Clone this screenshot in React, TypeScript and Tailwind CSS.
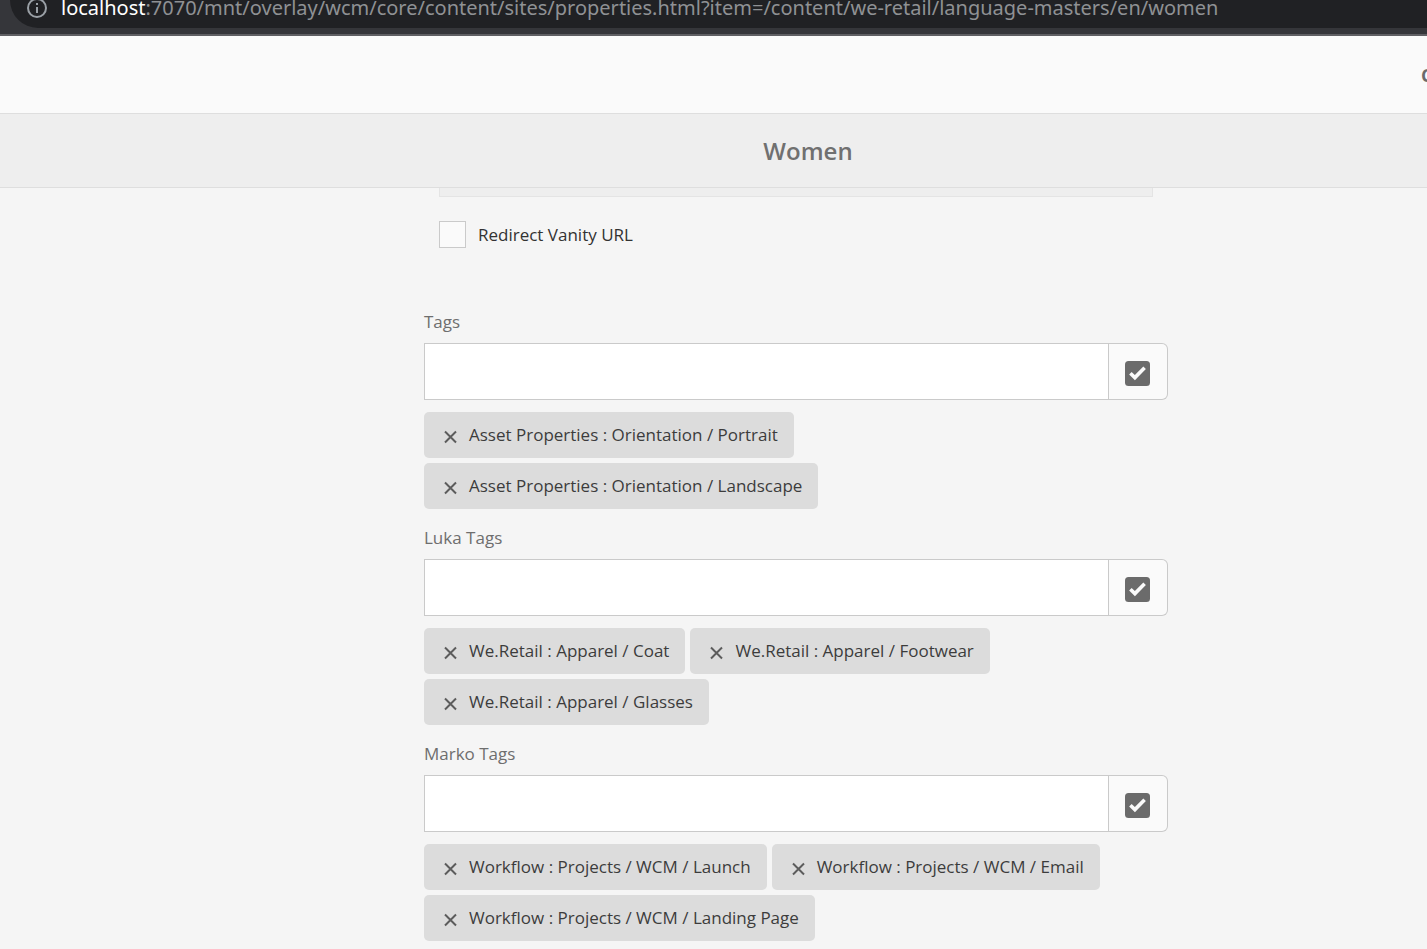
import { useState } from "react";

const fields = [
  {
    id: "tags",
    label: "Tags",
    tags: [
      "Asset Properties : Orientation / Portrait",
      "Asset Properties : Orientation / Landscape",
    ],
  },
  {
    id: "luka-tags",
    label: "Luka Tags",
    tags: [
      "We.Retail : Apparel / Coat",
      "We.Retail : Apparel / Footwear",
      "We.Retail : Apparel / Glasses",
    ],
  },
  {
    id: "marko-tags",
    label: "Marko Tags",
    tags: [
      "Workflow : Projects / WCM / Launch",
      "Workflow : Projects / WCM / Email",
      "Workflow : Projects / WCM / Landing Page",
    ],
  },
];

function InfoIcon() {
  return (
    <svg viewBox="0 0 22 22" className="mb-[3px] h-[22px] w-[22px] shrink-0" aria-hidden="true">
      <circle cx="11" cy="11" r="9" fill="none" stroke="#9aa0a6" strokeWidth="2" />
      <rect x="10" y="10" width="2" height="6" fill="#9aa0a6" />
      <rect x="10" y="6" width="2" height="2" fill="#9aa0a6" />
    </svg>
  );
}

function AddressBar() {
  return (
    <div className="border-b-2 border-[#5f5f63] bg-[#35363a] pb-[6px] pl-[10px]">
      <div className="flex h-7 items-end overflow-hidden rounded-bl-[28px] bg-[#202124] pb-[6px] pl-4">
        <InfoIcon />
        <span className="ml-[13px] font-['Noto_Sans','Open_Sans',sans-serif] text-[20px] leading-7 whitespace-nowrap text-[#8f9194]">
          <span className="text-white">localhost</span>
          :7070/mnt/overlay/wcm/core/content/sites/properties.html?item=/content/we-retail/language-masters/en/women
        </span>
      </div>
    </div>
  );
}

function Tag({ label, onRemove }: { label: string; onRemove: () => void }) {
  return (
    <li className="flex h-[46px] items-center rounded-[5px] bg-[#dcdcdc] pr-4 pl-5">
      <button type="button" aria-label={`Remove ${label}`} onClick={onRemove} className="mt-1">
        <svg viewBox="0 0 14 14" className="h-[14px] w-[14px]" aria-hidden="true">
          <path d="M1 1.5 12 12.5M12 1.5 1 12.5" stroke="#5c5c5c" strokeWidth="2" />
        </svg>
      </button>
      <span className="ml-[11px] whitespace-nowrap text-[#3c3c3c]">{label}</span>
    </li>
  );
}

function TagField({ id, label, tags }: { id: string; label: string; tags: string[] }) {
  const [selected, setSelected] = useState(tags);

  return (
    <div>
      <label htmlFor={id} className="mb-[9px] block leading-6 text-[#6e6e6e]">
        {label}
      </label>
      <div className="flex h-[57px]">
        <input
          id={id}
          type="text"
          className="min-w-0 flex-1 border border-[#cacaca] bg-white px-4 outline-none"
        />
        <button
          type="button"
          aria-label={`Select ${label}`}
          className="flex w-[59px] items-center rounded-r-md border border-l-0 border-[#cacaca] bg-[#fafafa] pt-1 pl-4"
        >
          <svg viewBox="0 0 25 25" className="h-[25px] w-[25px]" aria-hidden="true">
            <rect width="25" height="25" rx="3.5" fill="#6b6b6b" />
            <path d="M5.4 12.2 9.9 16.6 19.6 6.7" fill="none" stroke="#fafafa" strokeWidth="3.6" />
          </svg>
        </button>
      </div>
      <ul className="mt-3 flex flex-wrap gap-[5px]">
        {selected.map((tag) => (
          <Tag
            key={tag}
            label={tag}
            onRemove={() => setSelected(selected.filter((t) => t !== tag))}
          />
        ))}
      </ul>
    </div>
  );
}

export default function App() {
  return (
    <div className="min-h-screen overflow-x-hidden bg-[#f5f5f5] font-['Open_Sans',sans-serif] text-[17px]">
      <AddressBar />

      <header className="flex h-[78px] items-center justify-end border-b border-[#dedede] bg-[#fafafa]">
        <button
          type="button"
          className="w-[6px] overflow-hidden pt-[2px] text-left text-[18px] font-bold text-[#6b6b6b]"
        >
          C
        </button>
      </header>

      <div className="flex h-[74px] items-center justify-center border-b border-[#dedede] bg-[#eeeeee] pl-[189px]">
        <h1 className="text-[24px] font-semibold text-[#707070]">Women</h1>
      </div>

      <main className="pb-2 pl-[165px]">
        <form className="mx-auto w-full max-w-[744px]">
          <div className="px-[15px]">
            <div className="h-[9px] border border-t-0 border-[#e4e4e4] bg-[#eeeeee]" />
            <label className="mt-6 flex h-[27px] items-center text-[#323232]">
              <input
                type="checkbox"
                className="mr-3 h-[27px] w-[27px] appearance-none border border-[#cacaca] bg-[#fafafa]"
              />
              Redirect Vanity URL
            </label>
          </div>

          <div className="mt-[62px] flex flex-col gap-[17px]">
            {fields.map((field) => (
              <TagField key={field.id} {...field} />
            ))}
          </div>
        </form>
      </main>
    </div>
  );
}
